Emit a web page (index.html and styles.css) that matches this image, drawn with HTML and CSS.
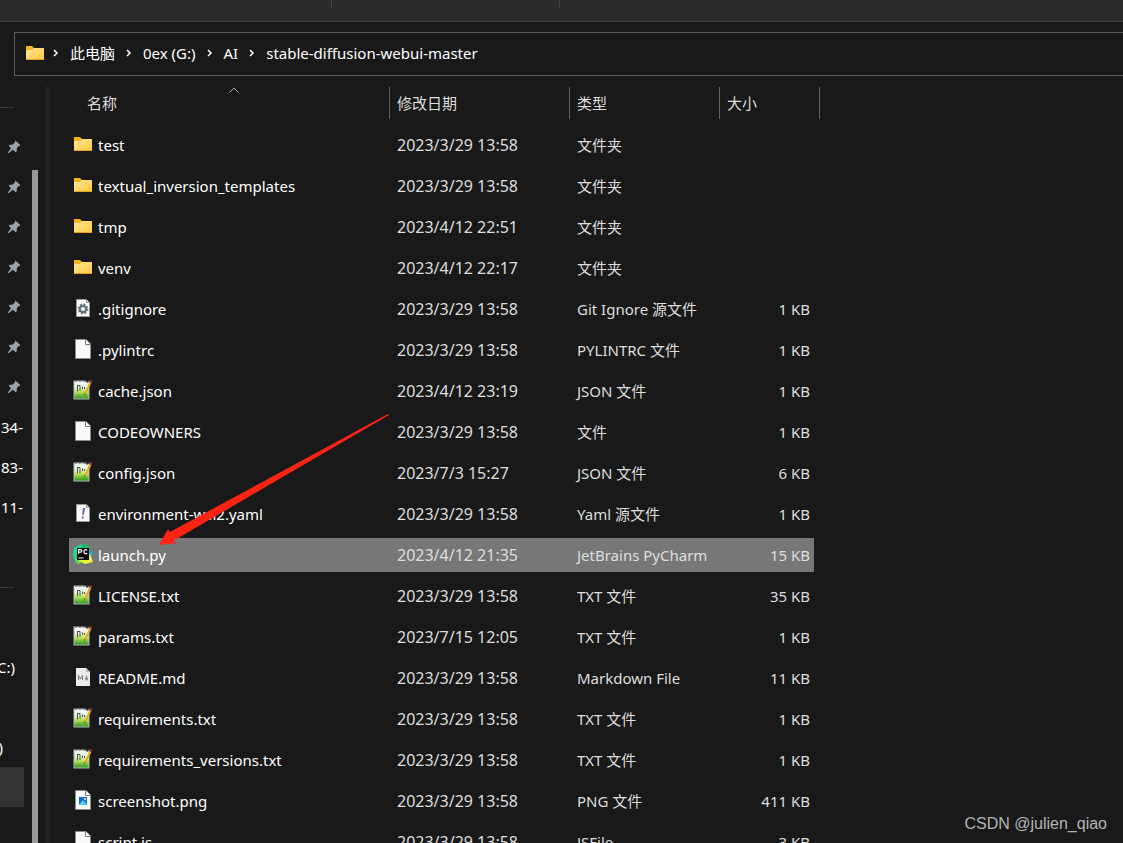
FILE: index.html
```html
<!DOCTYPE html>
<html lang="zh-CN">
<head>
<meta charset="utf-8">
<title>stable-diffusion-webui-master</title>
<link rel="stylesheet" href="styles.css">
</head>
<body>
<svg class="symbols" aria-hidden="true">
  <defs>
    <linearGradient id="gFolder" x1="0" y1="0" x2="1" y2="1"><stop offset="0" stop-color="#ffe8a0"/><stop offset="1" stop-color="#ffc83a"/></linearGradient>
    <linearGradient id="gGreen" x1="0" y1="0" x2="0" y2="1"><stop offset="0" stop-color="#f4f8f8"/><stop offset=".35" stop-color="#e8f2dc"/><stop offset=".6" stop-color="#c0e660"/><stop offset="1" stop-color="#2f9a20"/></linearGradient>
    <linearGradient id="gImage" x1="0" y1="0" x2="1" y2="1"><stop offset="0" stop-color="#1468c8"/><stop offset="1" stop-color="#2a72d8"/></linearGradient>
  </defs>
  <symbol id="folder" viewBox="0 0 20 20"><path d="M1 3h6l2 2h10v4H1z" fill="#fbb117"/><path d="M1 7h6l2-2h10v12H1z" fill="url(#gFolder)"/><path d="M1 16h18v1H1z" fill="#e8a21c"/></symbol>
  <symbol id="page" viewBox="0 0 20 20"><path d="M2.500.5h10.500l4.500 4.500v14.500h-15z" fill="#fafafa" stroke="#8a8a8a"/><path d="M12.500.5v5h5" fill="#fff" stroke="#777"/></symbol>
  <symbol id="gear" viewBox="0 0 20 20"><path d="M3.500 1.500h10l3 3v14h-13z" fill="#fafafa" stroke="#999"/><path d="M13.500 1.500v3h3" fill="none" stroke="#888"/><circle cx="10" cy="11" r="3.200" fill="none" stroke="#5d717c" stroke-width="2.200"/><circle cx="10" cy="11" r="4.700" fill="none" stroke="#5d717c" stroke-width="1.500" stroke-dasharray="1.850 1.840"/></symbol>
  <symbol id="bang" viewBox="0 0 20 20"><path d="M3.500 1.500h10l3 3v14h-13z" fill="#fafafa" stroke="#999"/><path d="M13.500 1.500v3h3" fill="none" stroke="#888"/><path d="M9.800 5h2.400l-1.500 7H9.300zM9 13.500h1.800l-.4 2H8.600z" fill="#8458a8"/></symbol>
  <symbol id="notepad" viewBox="0 0 20 20"><path d="M.5.500h16v19H.5z" fill="#b4b8b8"/><path d="M1.500 1.500h14v17h-14z" fill="url(#gGreen)"/><path d="M2 1.500h2M6 1.500h2M10 1.500h2" stroke="#999"/><path d="M11.500 0h6l-3.500 3z" fill="#333"/><path d="M4.500 5v6.500M7 5.500V11M4.500 5.500H7" fill="none" stroke="#4a5244"/><path d="M9.500 6.500v2.500M11.500 7v2" stroke="#4a5244"/><path d="M17.500 2.500 12 14" stroke="#e8a820" stroke-width="2"/><path d="m18.500.5-1 2" stroke="#a83228" stroke-width="2"/><path d="m12 13-.7 3" stroke="#776648"/></symbol>
  <symbol id="pycharm" viewBox="0 0 20 20"><path d="m1 4 7-4 6 3-3 14-8 2-3-8z" fill="#22d88f"/><path d="m8 1.500 5-2 4 4-5 3z" fill="#1bbd68"/><path d="m15 5 5 4-3 4z" fill="#10b8e8"/><path d="m5 17 12-7 3 8-8 2z" fill="#edf23f"/><path d="m0 12 5 5 6 1-6 2z" fill="#70df45"/><path d="M4 4h12v12H4z" fill="#080808"/><path d="M5.600 10V5.700h2q1.200 0 1.200 1.200t-1.200 1.200h-2M14.200 6.200q-.8-.6-1.700-.5-1.600.2-1.600 2t1.600 2q.9.100 1.700-.5M5.500 14h5" fill="none" stroke="#fff" stroke-width="1.200"/></symbol>
  <symbol id="markdown" viewBox="0 0 20 20"><path d="M3 1h10l4 4v14H3z" fill="#ececec"/><path d="M13 1v4h4z" fill="#bbb"/><path d="M5.500 13V9L7.500 11.500 9.500 9v4M13.500 8.500V13M12 11.200l1.500 1.800 1.500-1.800" fill="none" stroke="#858585" stroke-width="1.200"/></symbol>
  <symbol id="image" viewBox="0 0 20 20"><path d="M2.500.5h10.500l4.500 4.500v14.500h-15z" fill="#fafafa" stroke="#8a8a8a"/><path d="M12.500.5v5h5" fill="#fff" stroke="#777"/><path d="M6 7h8v8H6z" fill="url(#gImage)"/><path d="m6 14.500 4-4.500 4 4.500v.5H6z" fill="#45d0f8"/><circle cx="12" cy="9" r="1" fill="#d8efff"/></symbol>
  <symbol id="pin" viewBox="0 0 14 14"><path d="m8.300.6 5 4.400-1 1.300-.9-.1-1.700 2.400.2 2.600-1.400 1-2.600-2.400L1.400 13.300.6 12.800l3.500-4.500-2.400-2.400 1-1.200 2.700.1 2.200-2.100z" fill="#97a2a9"/></symbol>
</svg>

<header class="toolbar"><span class="tool-slot"></span><span class="tool-slot tool-slot-next"></span></header>

<nav class="address" aria-label="路径">
  <svg class="icon"><use href="#folder"/></svg>
  <svg class="chev" viewBox="0 0 6 8"><path d="m1 1 3 3-3 3"/></svg><a href="#">此电脑</a>
  <svg class="chev" viewBox="0 0 6 8"><path d="m1 1 3 3-3 3"/></svg><a href="#">0ex (G:)</a>
  <svg class="chev" viewBox="0 0 6 8"><path d="m1 1 3 3-3 3"/></svg><a href="#">AI</a>
  <svg class="chev" viewBox="0 0 6 8"><path d="m1 1 3 3-3 3"/></svg><a href="#">stable-diffusion-webui-master</a>
</nav>

<div class="body">
  <aside class="sidebar">
    <ul class="places">
      <li class="rule"></li>
      <li><svg class="pin"><use href="#pin"/></svg></li>
      <li><svg class="pin"><use href="#pin"/></svg></li>
      <li><svg class="pin"><use href="#pin"/></svg></li>
      <li><svg class="pin"><use href="#pin"/></svg></li>
      <li><svg class="pin"><use href="#pin"/></svg></li>
      <li><svg class="pin"><use href="#pin"/></svg></li>
      <li><svg class="pin"><use href="#pin"/></svg></li>
      <li class="wide">34-</li>
      <li class="wide">83-</li>
      <li class="wide">11-</li>
      <li></li>
      <li class="rule"></li>
      <li></li>
      <li class="drive">C:)</li>
      <li></li>
      <li class="drive-short">)</li>
      <li class="current"></li>
    </ul>
    <div class="track"><div class="thumb"></div></div>
  </aside>
  <div class="divider"></div>

  <main class="files">
    <table>
      <colgroup><col class="c-name"><col class="c-date"><col class="c-type"><col class="c-size"><col class="c-end"></colgroup>
      <thead>
        <tr><th class="th-name">名称<svg class="sort" viewBox="0 0 10 6"><path d="m.5 5.500 4.500-4.500 4.500 4.500"/></svg></th><th>修改日期</th><th>类型</th><th colspan="2">大小</th></tr>
      </thead>
      <tbody>
        <tr><td><div class="name"><svg class="icon"><use href="#folder"/></svg>test</div></td><td>2023/3/29 13:58</td><td>文件夹</td><td></td></tr>
        <tr><td><div class="name"><svg class="icon"><use href="#folder"/></svg>textual_inversion_templates</div></td><td>2023/3/29 13:58</td><td>文件夹</td><td></td></tr>
        <tr><td><div class="name"><svg class="icon"><use href="#folder"/></svg>tmp</div></td><td>2023/4/12 22:51</td><td>文件夹</td><td></td></tr>
        <tr><td><div class="name"><svg class="icon"><use href="#folder"/></svg>venv</div></td><td>2023/4/12 22:17</td><td>文件夹</td><td></td></tr>
        <tr><td><div class="name"><svg class="icon"><use href="#gear"/></svg>.gitignore</div></td><td>2023/3/29 13:58</td><td>Git Ignore 源文件</td><td>1 KB</td></tr>
        <tr><td><div class="name"><svg class="icon"><use href="#page"/></svg>.pylintrc</div></td><td>2023/3/29 13:58</td><td>PYLINTRC 文件</td><td>1 KB</td></tr>
        <tr><td><div class="name"><svg class="icon"><use href="#notepad"/></svg>cache.json</div></td><td>2023/4/12 23:19</td><td>JSON 文件</td><td>1 KB</td></tr>
        <tr><td><div class="name"><svg class="icon"><use href="#page"/></svg>CODEOWNERS</div></td><td>2023/3/29 13:58</td><td>文件</td><td>1 KB</td></tr>
        <tr><td><div class="name"><svg class="icon"><use href="#notepad"/></svg>config.json</div></td><td>2023/7/3 15:27</td><td>JSON 文件</td><td>6 KB</td></tr>
        <tr><td><div class="name"><svg class="icon"><use href="#bang"/></svg>environment-wsl2.yaml</div></td><td>2023/3/29 13:58</td><td>Yaml 源文件</td><td>1 KB</td></tr>
        <tr class="selected"><td><div class="name"><svg class="icon"><use href="#pycharm"/></svg>launch.py</div></td><td>2023/4/12 21:35</td><td>JetBrains PyCharm</td><td>15 KB</td></tr>
        <tr><td><div class="name"><svg class="icon"><use href="#notepad"/></svg>LICENSE.txt</div></td><td>2023/3/29 13:58</td><td>TXT 文件</td><td>35 KB</td></tr>
        <tr><td><div class="name"><svg class="icon"><use href="#notepad"/></svg>params.txt</div></td><td>2023/7/15 12:05</td><td>TXT 文件</td><td>1 KB</td></tr>
        <tr><td><div class="name"><svg class="icon"><use href="#markdown"/></svg>README.md</div></td><td>2023/3/29 13:58</td><td>Markdown File</td><td>11 KB</td></tr>
        <tr><td><div class="name"><svg class="icon"><use href="#notepad"/></svg>requirements.txt</div></td><td>2023/3/29 13:58</td><td>TXT 文件</td><td>1 KB</td></tr>
        <tr><td><div class="name"><svg class="icon"><use href="#notepad"/></svg>requirements_versions.txt</div></td><td>2023/3/29 13:58</td><td>TXT 文件</td><td>1 KB</td></tr>
        <tr><td><div class="name"><svg class="icon"><use href="#image"/></svg>screenshot.png</div></td><td>2023/3/29 13:58</td><td>PNG 文件</td><td>411 KB</td></tr>
        <tr><td><div class="name"><svg class="icon"><use href="#page"/></svg>script.js</div></td><td>2023/3/29 13:58</td><td>JSFile</td><td>3 KB</td></tr>
      </tbody>
    </table>
  </main>
</div>

<svg class="arrow" viewBox="0 0 230 132" aria-hidden="true"><path d="M0 131 9 115l2 3L229 0l1 1L14 127l4 2z"/></svg>
<div class="watermark">CSDN @julien_qiao</div>
</body>
</html>
```
FILE: styles.css
```css
* { box-sizing: border-box; }
body {
  margin: 0;
  height: 100vh;
  display: flex;
  flex-direction: column;
  overflow: hidden;
  position: relative;
  background: #191919;
  color: #fff;
  font: 15px/20px "Noto Sans", "Noto Sans CJK SC", sans-serif;
}
.symbols { position: absolute; width: 0; height: 0; }
.icon { width: 20px; height: 20px; flex: none; }

.toolbar {
  flex: none;
  display: flex;
  height: 22px;
  background: #2c2c2c;
  border-bottom: 1px solid #3b3b3b;
}
.tool-slot { width: 332px; height: 8px; border-right: 1px solid #454545; }
.tool-slot-next { width: 228px; }

.address {
  flex: none;
  display: flex;
  align-items: center;
  height: 44px;
  margin: 10px 0 11px 14px;
  padding: 0 0 2px 10px;
  border: 1px solid #5a5a5a;
  border-right: 0;
}
.address .icon { margin-right: -3px; }
.address a { color: #fff; text-decoration: none; white-space: nowrap; }
.chev {
  width: 6px;
  height: 8px;
  margin: 0 11px;
  fill: none;
  stroke: #fff;
  stroke-width: 1.5;
}

.body { flex: 1; min-height: 0; display: flex; overflow: hidden; }
.sidebar { flex: none; display: flex; gap: 8px; width: 46px; }
.places { width: 24px; margin: 0; padding: 0; list-style: none; }
.places li {
  display: flex;
  align-items: center;
  justify-content: flex-end;
  height: 40px;
  overflow: hidden;
  white-space: nowrap;
}
.places .rule::before { content: ""; width: 14px; height: 1px; margin-right: 10px; background: #3c3c3c; }
.places .wide { padding-right: 1px; }
.places .drive { padding-right: 9px; }
.places .drive-short { padding-right: 21px; }
.places .current { background: #333; border-radius: 0 2px 2px 0; }
.pin { width: 14px; height: 14px; margin-right: 3px; }
.track { width: 6px; padding-top: 83px; }
.thumb { height: 100%; background: #999; }
.divider { flex: none; width: 4px; background: #222; border-left: 1px solid #2d2d2d; }

.files { flex: 1; margin-top: -7px; padding-left: 19px; }
table { width: 751px; table-layout: fixed; border-collapse: separate; border-spacing: 0 7px; }
.c-date { width: 180px; }
.c-type { width: 150px; }
.c-size { width: 95px; }
.c-end { width: 6px; }
th, td { height: 34px; padding: 0 0 0 8px; color: #dedede; text-align: left; font-weight: 400; white-space: nowrap; }
th { position: relative; padding-bottom: 2px; }
th::after {
  content: "";
  position: absolute;
  top: 0;
  right: -1px;
  bottom: 2px;
  width: 1px;
  background: #636363;
}
th:last-child::after { right: 0; }
.th-name { padding-left: 18px; }
.sort {
  position: absolute;
  top: 0;
  left: 160px;
  width: 10px;
  height: 6px;
  fill: none;
  stroke: #aaa;
}
td:first-child { padding-left: 4px; color: #fff; }
td:nth-child(2) { font-size: 16px; }
td:nth-child(4) { padding: 0 4px 0 0; text-align: right; }
.name { display: flex; align-items: center; gap: 5px; }
.name .icon { margin-bottom: 2px; }
.selected td { background: #777; }

.arrow { position: absolute; left: 159px; top: 414px; width: 230px; height: 132px; fill: #ff2315; }
.watermark {
  position: absolute;
  right: 16px;
  bottom: 9px;
  color: #b4b4b4;
  font: 16px/20px "Liberation Sans", sans-serif;
}
```
